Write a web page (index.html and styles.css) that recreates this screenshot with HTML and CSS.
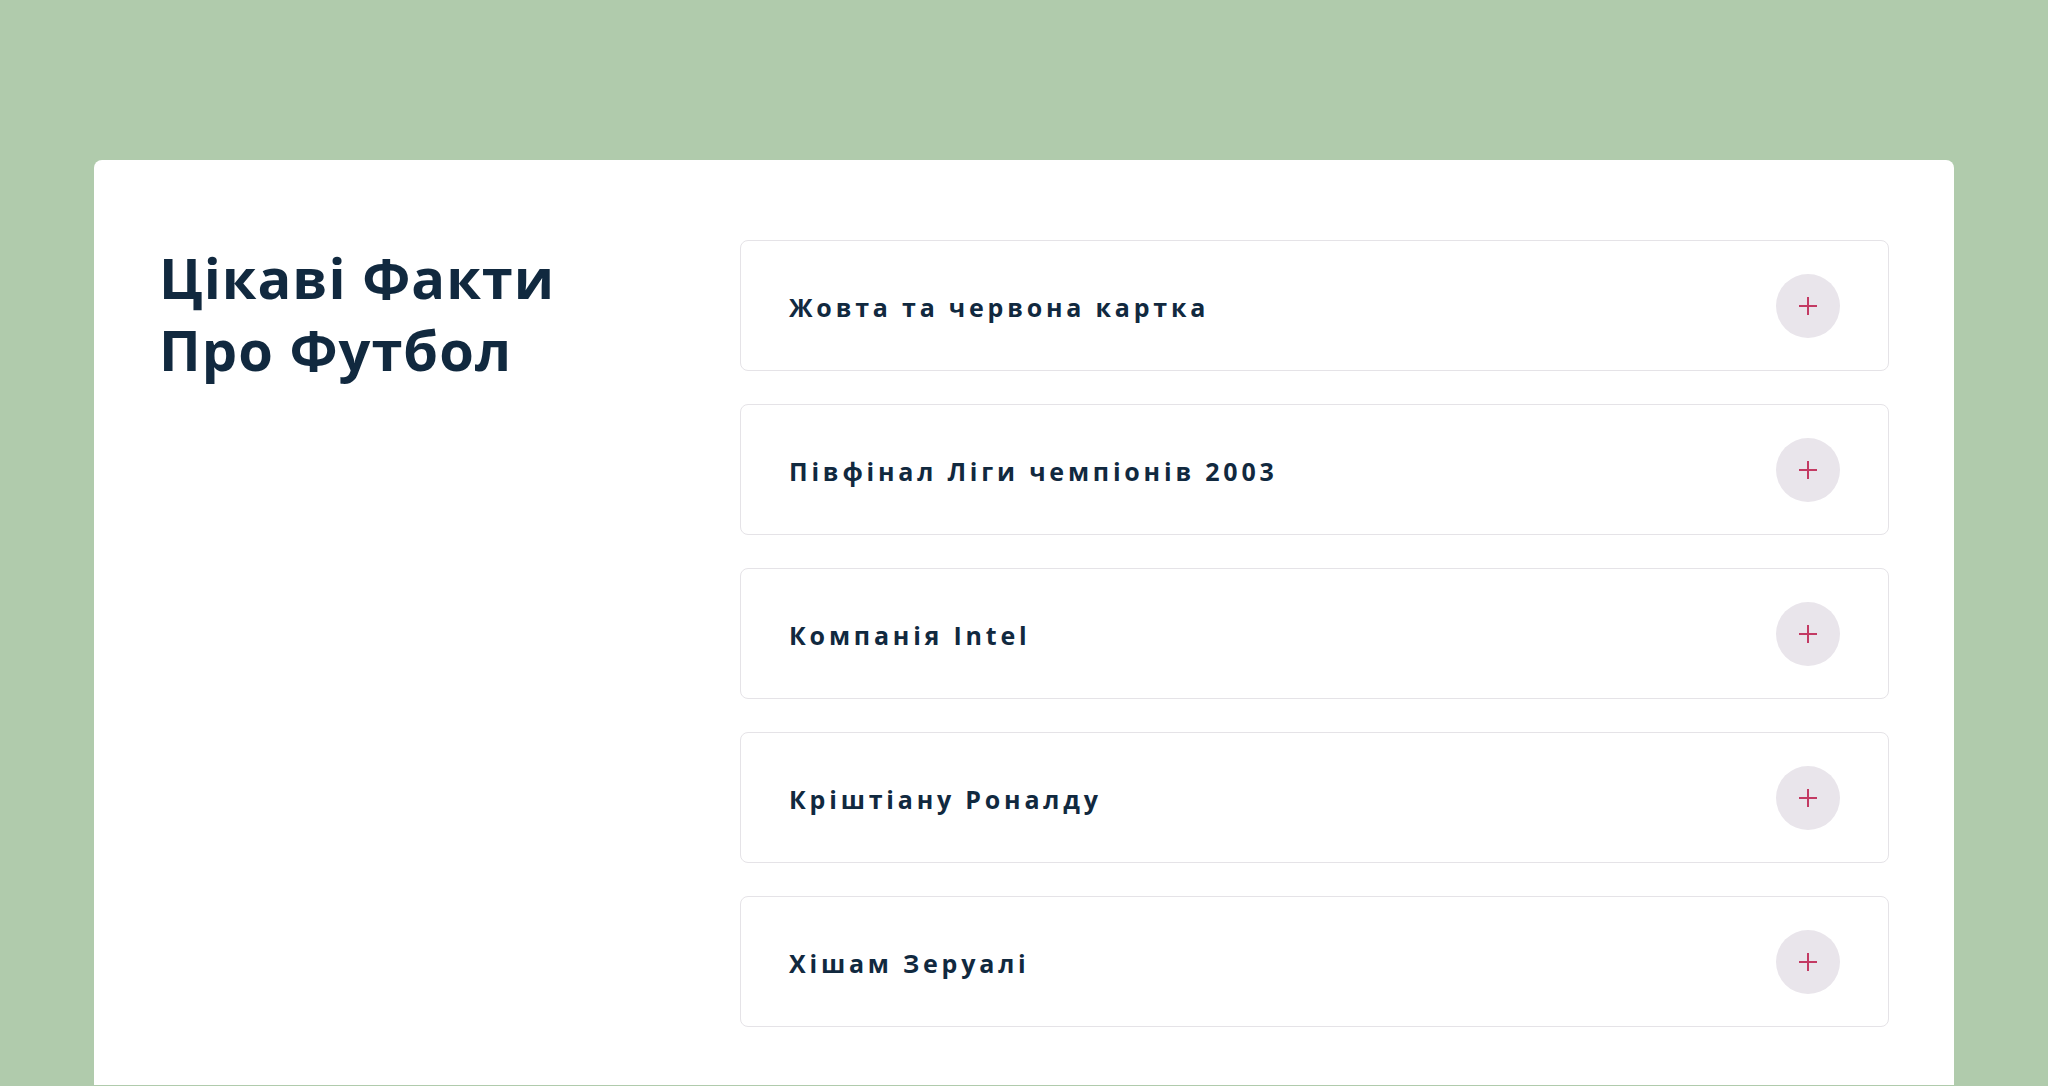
FILE: index.html
```html
<!DOCTYPE html>
<html lang="uk">
<head>
<meta charset="utf-8">
<title>Цікаві Факти Про Футбол</title>
<link rel="stylesheet" href="styles.css">
</head>
<body>
<main class="page">
  <section class="card">
    <h1 class="title">Цікаві Факти<br>Про Футбол</h1>
    <div class="faq">
      <div class="item"><span class="q">Жовта та червона картка</span><span class="toggle"><svg viewBox="0 0 18 18" width="18" height="18"><path d="M9 0v18M0 9h18" stroke="currentColor" stroke-width="2" fill="none"/></svg></span></div>
      <div class="item"><span class="q">Півфінал Ліги чемпіонів 2003</span><span class="toggle"><svg viewBox="0 0 18 18" width="18" height="18"><path d="M9 0v18M0 9h18" stroke="currentColor" stroke-width="2" fill="none"/></svg></span></div>
      <div class="item"><span class="q">Компанія Intel</span><span class="toggle"><svg viewBox="0 0 18 18" width="18" height="18"><path d="M9 0v18M0 9h18" stroke="currentColor" stroke-width="2" fill="none"/></svg></span></div>
      <div class="item"><span class="q">Кріштіану Роналду</span><span class="toggle"><svg viewBox="0 0 18 18" width="18" height="18"><path d="M9 0v18M0 9h18" stroke="currentColor" stroke-width="2" fill="none"/></svg></span></div>
      <div class="item"><span class="q">Хішам Зеруалі</span><span class="toggle"><svg viewBox="0 0 18 18" width="18" height="18"><path d="M9 0v18M0 9h18" stroke="currentColor" stroke-width="2" fill="none"/></svg></span></div>
    </div>
  </section>
</main>
</body>
</html>
```

FILE: styles.css
```css
* { box-sizing: border-box; }
html, body {
  margin: 0;
  padding: 0;
  background: #b0cbac;
  font-family: "Open Sans", "Noto Sans", sans-serif;
  color: #11293f;
}
body { height: 1086px; overflow: hidden; }
.page {
  padding: 160px 94px 0 94px;
}
.card {
  background: #ffffff;
  border-radius: 8px 8px 0 0;
  height: 925px;
  padding: 80px 65px;
  display: grid;
  grid-template-columns: 581px 1fr;
  align-items: start;
}
.title {
  margin: 1px 0 0;
  font-size: 56px;
  line-height: 72px;
  font-weight: 700;
  letter-spacing: 1px;
  color: #11293f;
}
.faq {
  display: flex;
  flex-direction: column;
  gap: 33px;
}
.item {
  height: 131px;
  border: 1px solid #e5e3e7;
  border-radius: 8px;
  display: flex;
  align-items: center;
  justify-content: space-between;
  padding: 2px 48px 0 48px;
}
.q {
  font-size: 25px;
  font-weight: 700;
  letter-spacing: 3.8px;
  color: #11293f;
}
.toggle {
  width: 64px;
  height: 64px;
  border-radius: 50%;
  background: #e9e5eb;
  color: #c33a63;
  display: flex;
  align-items: center;
  justify-content: center;
  margin-top: -2px;
}
.toggle svg { display: block; }
```
